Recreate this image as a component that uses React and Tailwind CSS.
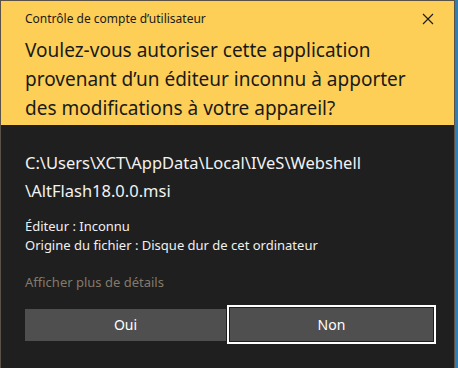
import React from "react";

function CloseIcon() {
  return (
    <svg width="12" height="12" viewBox="0 0 12 12" className="block">
      <path d="M1 1 L11 11 M11 1 L1 11" stroke="#1a1a1a" strokeWidth="1.1" fill="none" />
    </svg>
  );
}

export default function App() {
  return (
    <div
      className="flex w-[458px] h-[368px] bg-[#1f1f1f] text-white"
      style={{ fontFamily: '"Noto Sans", "Open Sans", sans-serif' }}
    >
      <div className="flex flex-col w-[455px] h-full border-l border-t border-r border-[#5a5246]">
        <div className="h-[124px] bg-[#fdcf56] text-[#1a1a1a] px-6">
          <div className="flex items-center justify-between h-[35px]">
            <span className="text-[12px]">Contrôle de compte d’utilisateur</span>
            <span className="mr-[-4px]">
              <CloseIcon />
            </span>
          </div>
          <p className="text-[19px] leading-[29px]">
            Voulez-vous autoriser cette application provenant d’un éditeur inconnu à apporter des modifications à votre appareil?
          </p>
        </div>
        <div className="flex-1 pl-6 pt-[24px]">
          <p className="text-[16.5px] leading-[28px] text-[#f2f2f2]">
            C:\Users\XCT\AppData\Local\IVeS\Webshell
            <br />
            \AltFlash18.0.0.msi
          </p>
          <div className="mt-[12px] text-[13px] leading-[19px] text-[#f0f0f0]">
            <p>Éditeur : Inconnu</p>
            <p>Origine du fichier : Disque dur de cet ordinateur</p>
          </div>
          <p className="mt-[18px] text-[13px] leading-[18px] text-[#847a6a]">Afficher plus de détails</p>
          <div className="mt-[14px] flex items-center">
            <button className="shrink-0 w-[201px] h-[32px] bg-[#4f4f4f] text-[14px] text-white">Oui</button>
            <div className="shrink-0 ml-[1px] w-[209px] h-[39px] border-2 border-white p-[1px]">
              <button className="w-full h-full bg-[#4f4f4f] text-[14px] text-white">Non</button>
            </div>
          </div>
        </div>
      </div>
      <div className="w-[3px] h-full bg-[#2f7fb4]" />
    </div>
  );
}
